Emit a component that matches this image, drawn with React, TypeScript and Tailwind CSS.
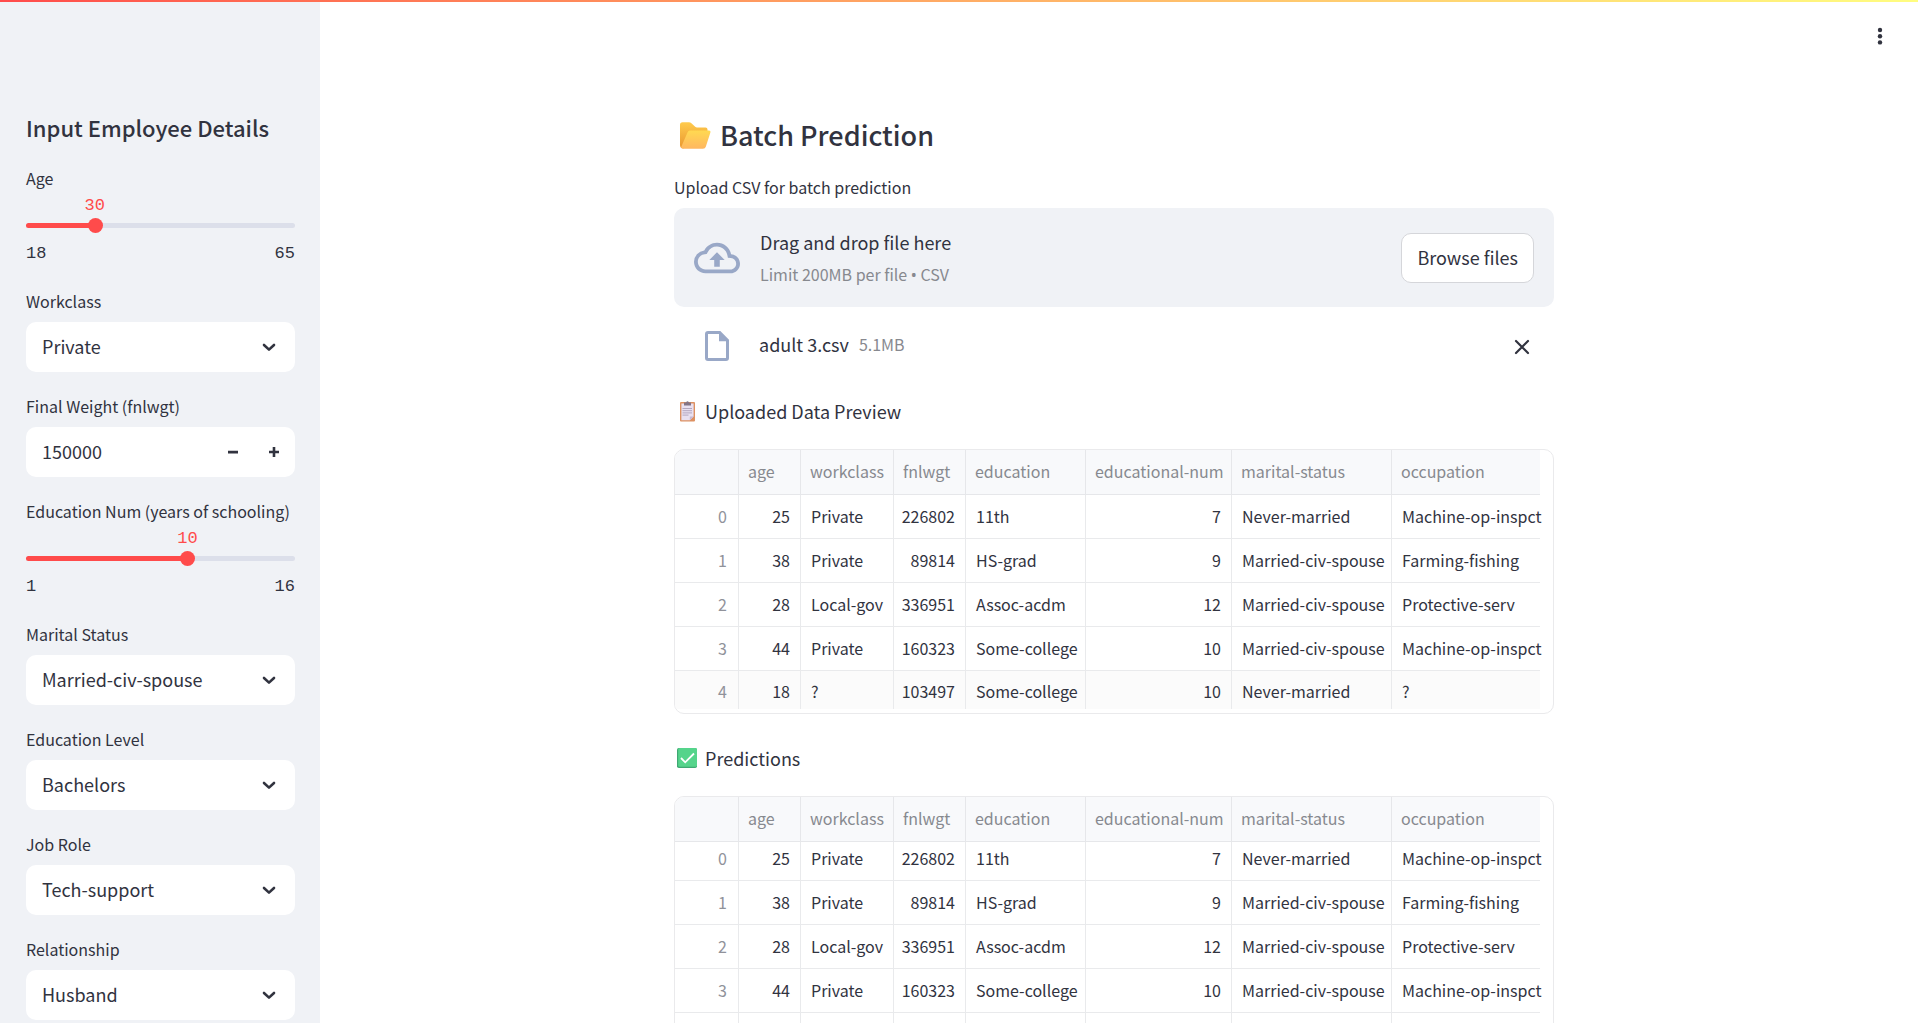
import { useId, useState, type ReactNode } from "react";

function Chevron() {
  return (
    <svg className="pointer-events-none absolute top-[15px] right-4 size-5" viewBox="0 0 20 20" fill="none" stroke="#31333f" strokeWidth="2.6" strokeLinecap="round" strokeLinejoin="round" aria-hidden="true">
      <path d="M5 8 10 12.6 15 8" />
    </svg>
  );
}

function Label({ id, children }: { id: string; children: ReactNode }) {
  return (
    <label htmlFor={id} className="mb-[7px] block text-base leading-7 whitespace-nowrap">
      {children}
    </label>
  );
}

function SelectField({ label, value }: { label: string; value: string }) {
  const id = useId();
  return (
    <div>
      <Label id={id}>{label}</Label>
      <div className="relative">
        <select id={id} defaultValue={value} className="block h-[50px] w-full appearance-none rounded-[10px] bg-white pr-10 pb-0.5 pl-4 text-lg leading-7 outline-none">
          <option>{value}</option>
        </select>
        <Chevron />
      </div>
    </div>
  );
}

function SliderField({ label, min, max, initial }: { label: string; min: number; max: number; initial: number }) {
  const id = useId();
  const [value, setValue] = useState(initial);
  const percent = ((value - min) / (max - min)) * 100;
  return (
    <div>
      <Label id={id}>{label}</Label>
      <div className="-mt-1 h-7 font-['Liberation_Mono',monospace] text-[17px] leading-[22px] text-[#ff4b4b]">
        <output htmlFor={id} className="relative inline-block -translate-x-1/2" style={{ left: `${percent}%` }}>
          {value}
        </output>
      </div>
      <div className="relative h-[5px] rounded-full bg-[#dcdfea]">
        <div className="h-full rounded-full bg-[#ff4b4b]" style={{ width: `${percent}%` }} />
        <input
          id={id}
          type="range"
          min={min}
          max={max}
          value={value}
          onChange={(e) => setValue(Number(e.target.value))}
          className="absolute -top-[5px] -left-[7px] h-[15px] w-[calc(100%+15px)] appearance-none bg-transparent outline-none [&::-webkit-slider-thumb]:size-[15px] [&::-webkit-slider-thumb]:appearance-none [&::-webkit-slider-thumb]:rounded-full [&::-webkit-slider-thumb]:bg-[#ff4b4b]"
        />
      </div>
      <div className="mt-[13px] flex justify-between font-['Liberation_Mono',monospace] text-[17px] leading-[26px]">
        <span>{min}</span>
        <span>{max}</span>
      </div>
    </div>
  );
}

function NumberField({ label, initial }: { label: string; initial: number }) {
  const id = useId();
  const [value, setValue] = useState(initial);
  return (
    <div>
      <Label id={id}>{label}</Label>
      <div className="flex h-[50px] overflow-hidden rounded-[10px] bg-white">
        <input id={id} inputMode="numeric" value={value} onChange={(e) => setValue(Number(e.target.value) || 0)} className="min-w-0 flex-1 pb-0.5 pl-4 text-lg outline-none" />
        <button type="button" aria-label="Decrease" onClick={() => setValue(value - 1)} className="grid w-10 place-items-center">
          <svg width="20" height="20" viewBox="0 0 20 20" fill="#31333f"><path d="M5 8.7h10v2.8H5z" /></svg>
        </button>
        <button type="button" aria-label="Increase" onClick={() => setValue(value + 1)} className="grid w-[42px] place-items-center">
          <svg width="20" height="20" viewBox="0 0 20 20" fill="#31333f"><path d="M5 8.700h3.700V5h2.600v3.700H15v2.600h-3.700V15H8.700v-3.700H5z" /></svg>
        </button>
      </div>
    </div>
  );
}

function FolderIcon() {
  return (
    <svg className="mr-[9px] ml-1.5 h-[27px] w-[31px]" viewBox="0 0 31 27" aria-hidden="true">
      <defs>
        <linearGradient id="folder-back" x1="0" y1="0" x2="0" y2="1"><stop stopColor="#ffcb4d" /><stop offset="1" stopColor="#e9962f" /></linearGradient>
        <linearGradient id="folder-front" x1="0" y1="0" x2="0" y2="1"><stop stopColor="#ffd951" /><stop offset="1" stopColor="#ffb760" /></linearGradient>
      </defs>
      <path d="M0 2.8Q0 .3 2.5.3H9q1.4 0 2.4.9l3.8 3.6Q16 5.6 17 5.6h8.500q2 0 2 2V16L3 26.500Q0 26 0 23z" fill="url(#folder-back)" />
      <path d="M7.600 10.300Q8.300 8.600 10 8.600h19q2 0 1.400 2l-4.600 14.200Q25.200 26.700 23 26.700H3.500Q.5 26.700 1.500 24.200z" fill="url(#folder-front)" />
    </svg>
  );
}

function ClipboardIcon() {
  return (
    <svg className="mr-2.5 ml-1.5 h-[21px] w-[15px]" viewBox="0 0 15 21" aria-hidden="true">
      <rect y="1" width="15" height="19.500" rx="1" fill="#dd9162" />
      <path d="M1.400 2.500h12.200v13l-3.800 3.800H1.400z" fill="#e8e0f1" />
      <path d="M13.600 15.500h-3.800v3.800z" fill="#c6b8d4" />
      <path d="M2.500 7.500h9.500M2.500 9.700h9.500M2.500 11.900h9.500M2.500 14.100h6" stroke="#b3a7bf" strokeWidth="1" />
      <path d="M4 1.500h2Q7.500-.8 9 1.500h2v3H4z" fill="#837486" />
    </svg>
  );
}

function CheckIcon() {
  return (
    <svg className="mr-2 ml-[3px] size-5" viewBox="0 0 20 20" aria-hidden="true">
      <rect width="20" height="20" rx="1.800" fill="#3fa873" />
      <rect x="1.200" width="18.800" height="18.800" rx="1.500" fill="#55d48b" />
      <path d="m4 10 4.200 4.300L17 5.500" fill="none" stroke="#fff" strokeWidth="1.800" />
    </svg>
  );
}

const columns = [
  { name: "age", width: "w-[62px]", numeric: true },
  { name: "workclass", width: "w-[93px]", numeric: false },
  { name: "fnlwgt", width: "w-[72px]", numeric: true },
  { name: "education", width: "w-[120px]", numeric: false },
  { name: "educational-num", width: "w-[146px]", numeric: true },
  { name: "marital-status", width: "w-[160px]", numeric: false },
  { name: "occupation", width: "", numeric: false },
];

const rows = [
  ["25", "Private", "226802", "11th", "7", "Never-married", "Machine-op-inspct"],
  ["38", "Private", "89814", "HS-grad", "9", "Married-civ-spouse", "Farming-fishing"],
  ["28", "Local-gov", "336951", "Assoc-acdm", "12", "Married-civ-spouse", "Protective-serv"],
  ["44", "Private", "160323", "Some-college", "10", "Married-civ-spouse", "Machine-op-inspct"],
  ["18", "?", "103497", "Some-college", "10", "Never-married", "?"],
];

const emptyRow = ["", "", "", "", "", "", ""];

function DataTable({ label, scrolled = false }: { label: string; scrolled?: boolean }) {
  const shown = scrolled ? [...rows.slice(0, 4), emptyRow] : rows;
  return (
    <div className="mt-[22px] overflow-hidden rounded-[10px] border border-[#eaeaec] pr-[13px] pb-1">
      <table aria-label={label} className="w-full table-fixed border-separate border-spacing-0 text-base leading-6 whitespace-nowrap">
        <thead className="bg-[#f8f9fb] text-[#87898f]">
          <tr className="h-[45px]">
            <td className="w-16 border-r border-b border-[#e6e7ea]" />
            {columns.map((c) => (
              <th key={c.name} scope="col" className={`${c.width} border-b border-[#e6e7ea] pb-0.5 pl-[9px] text-left font-normal not-last:border-r`}>
                {c.name}
              </th>
            ))}
          </tr>
        </thead>
        <tbody>
          {shown.map((row, i) => {
            const last = i === shown.length - 1;
            const height = scrolled && i === 0 ? "h-[39px]" : last && !scrolled ? "h-[38px] bg-[#fbfbfb]" : "h-11";
            const pad = scrolled && i === 0 ? "pb-1.5" : last && !scrolled ? "pt-0.5" : "pb-0.5";
            const line = last ? "" : "border-b";
            return (
              <tr key={i} className={height}>
                <th scope="row" className={`${pad} ${line} border-r border-[#e9eaec] pr-[11px] text-right font-normal text-[#90929a]`}>
                  {row[0] && i}
                </th>
                {row.map((cell, j) => (
                  <td key={j} className={`${pad} ${line} border-[#e9eaec] not-last:border-r ${columns[j].numeric ? "pr-2.5 text-right" : "pl-2.5"}`}>
                    {cell}
                  </td>
                ))}
              </tr>
            );
          })}
        </tbody>
      </table>
    </div>
  );
}

export default function App() {
  return (
    <div className="relative flex h-screen overflow-hidden bg-white font-['Noto_Sans_CJK_SC',sans-serif] text-[#31333f]">
      <div className="absolute inset-x-0 top-0 z-10 h-0.5 bg-linear-to-r from-[#ff4b4b] to-[#fffd80]" />
      <aside className="w-80 shrink-0 overflow-hidden bg-[#f0f2f6] pt-[111px] pr-[25px] pl-[26px]">
        <h2 className="text-[22px] leading-8 font-medium whitespace-nowrap">Input Employee Details</h2>
        <form className="mt-[21px] flex flex-col gap-5">
          <SliderField label="Age" min={18} max={65} initial={30} />
          <SelectField label="Workclass" value="Private" />
          <NumberField label="Final Weight (fnlwgt)" initial={150000} />
          <SliderField label="Education Num (years of schooling)" min={1} max={16} initial={10} />
          <SelectField label="Marital Status" value="Married-civ-spouse" />
          <SelectField label="Education Level" value="Bachelors" />
          <SelectField label="Job Role" value="Tech-support" />
          <SelectField label="Relationship" value="Husband" />
        </form>
      </aside>
      <main className="relative min-w-0 flex-1 pr-2.5">
        <button type="button" aria-label="Main menu" className="absolute top-5 right-6 grid h-8 w-7 place-items-center">
          <svg width="6" height="20" viewBox="0 0 6 20" fill="#31333f"><circle cx="3" cy="4" r="2.200" /><circle cx="3" cy="10.200" r="2.200" /><circle cx="3" cy="16.400" r="2.200" /></svg>
        </button>
        <div className="mx-auto w-full max-w-[880px] pt-[115px]">
          <h1 className="flex items-center text-[27px] leading-10 font-medium"><FolderIcon />Batch Prediction</h1>
          <section className="mt-[18px]">
            <Label id="csv-upload">Upload CSV for batch prediction</Label>
            <div className="flex h-[99px] items-center rounded-[10px] bg-[#f0f2f6] px-5">
              <svg className="mr-5 h-[46px] w-[46px]" viewBox="0 0 24 24" fill="#99a8c7" aria-hidden="true">
                <path d="M19.350 10.040A7.490 7.490 0 0 0 12 4C9.110 4 6.600 5.640 5.350 8.040A5.994 5.994 0 0 0 0 14c0 3.310 2.690 6 6 6h13c2.760 0 5-2.240 5-5 0-2.640-2.050-4.780-4.650-4.960M19 18H6c-2.210 0-4-1.790-4-4 0-2.050 1.530-3.760 3.560-3.970l1.070-.110.500-.950A5.469 5.469 0 0 1 12 6c2.620 0 4.880 1.860 5.390 4.430l.300 1.500 1.530.110A2.980 2.980 0 0 1 22 15c0 1.650-1.350 3-3 3M8 13h2.550v3.500h2.900V13H16l-4-4z" />
              </svg>
              <div className="flex-1 pt-0.5">
                <div className="text-lg leading-8">Drag and drop file here</div>
                <div className="text-base leading-8 text-[#87898f]">
                  Limit 200MB per file <span className="font-['Noto_Sans',sans-serif]">•</span> CSV
                </div>
              </div>
              <input id="csv-upload" type="file" accept=".csv" className="sr-only" />
              <button type="button" className="h-[50px] rounded-[10px] border border-[#d5d6da] bg-white px-[15px] pb-0.5 text-lg leading-7">Browse files</button>
            </div>
            <div className="flex h-[77px] items-center pr-5 pl-[31px]">
              <svg className="mr-[30px] h-[30px] w-6" viewBox="0 0 24 30" fill="none" aria-hidden="true">
                <path d="M3 1.500h11.700L22.500 9.300V27q0 1.500-1.500 1.500H3Q1.500 28.500 1.500 27V3q0-1.500 1.500-1.500z" stroke="#99a8c7" strokeWidth="3" />
                <path d="M14 1.500v8.700h9z" fill="#99a8c7" />
              </svg>
              <div className="flex flex-1 items-center gap-2.5 pb-1 leading-7">
                <span className="text-lg leading-7">adult 3.csv</span>
                <span className="text-base leading-7 text-[#87898f]">5.1MB</span>
              </div>
              <button type="button" aria-label="Remove file" className="grid h-8 w-6 place-items-center pt-0.5">
                <svg width="16" height="16" viewBox="0 0 16 16" stroke="#31333f" strokeWidth="2.200" strokeLinecap="round"><path d="m2 2 12 12M14 2 2 14" /></svg>
              </button>
            </div>
          </section>
          <p className="mt-[11px] flex h-8 items-center text-lg leading-8"><ClipboardIcon />Uploaded Data Preview</p>
          <DataTable label="Uploaded Data Preview" />
          <p className="mt-7 flex h-8 items-center text-lg leading-8"><CheckIcon />Predictions</p>
          <DataTable label="Predictions" scrolled />
        </div>
      </main>
    </div>
  );
}
